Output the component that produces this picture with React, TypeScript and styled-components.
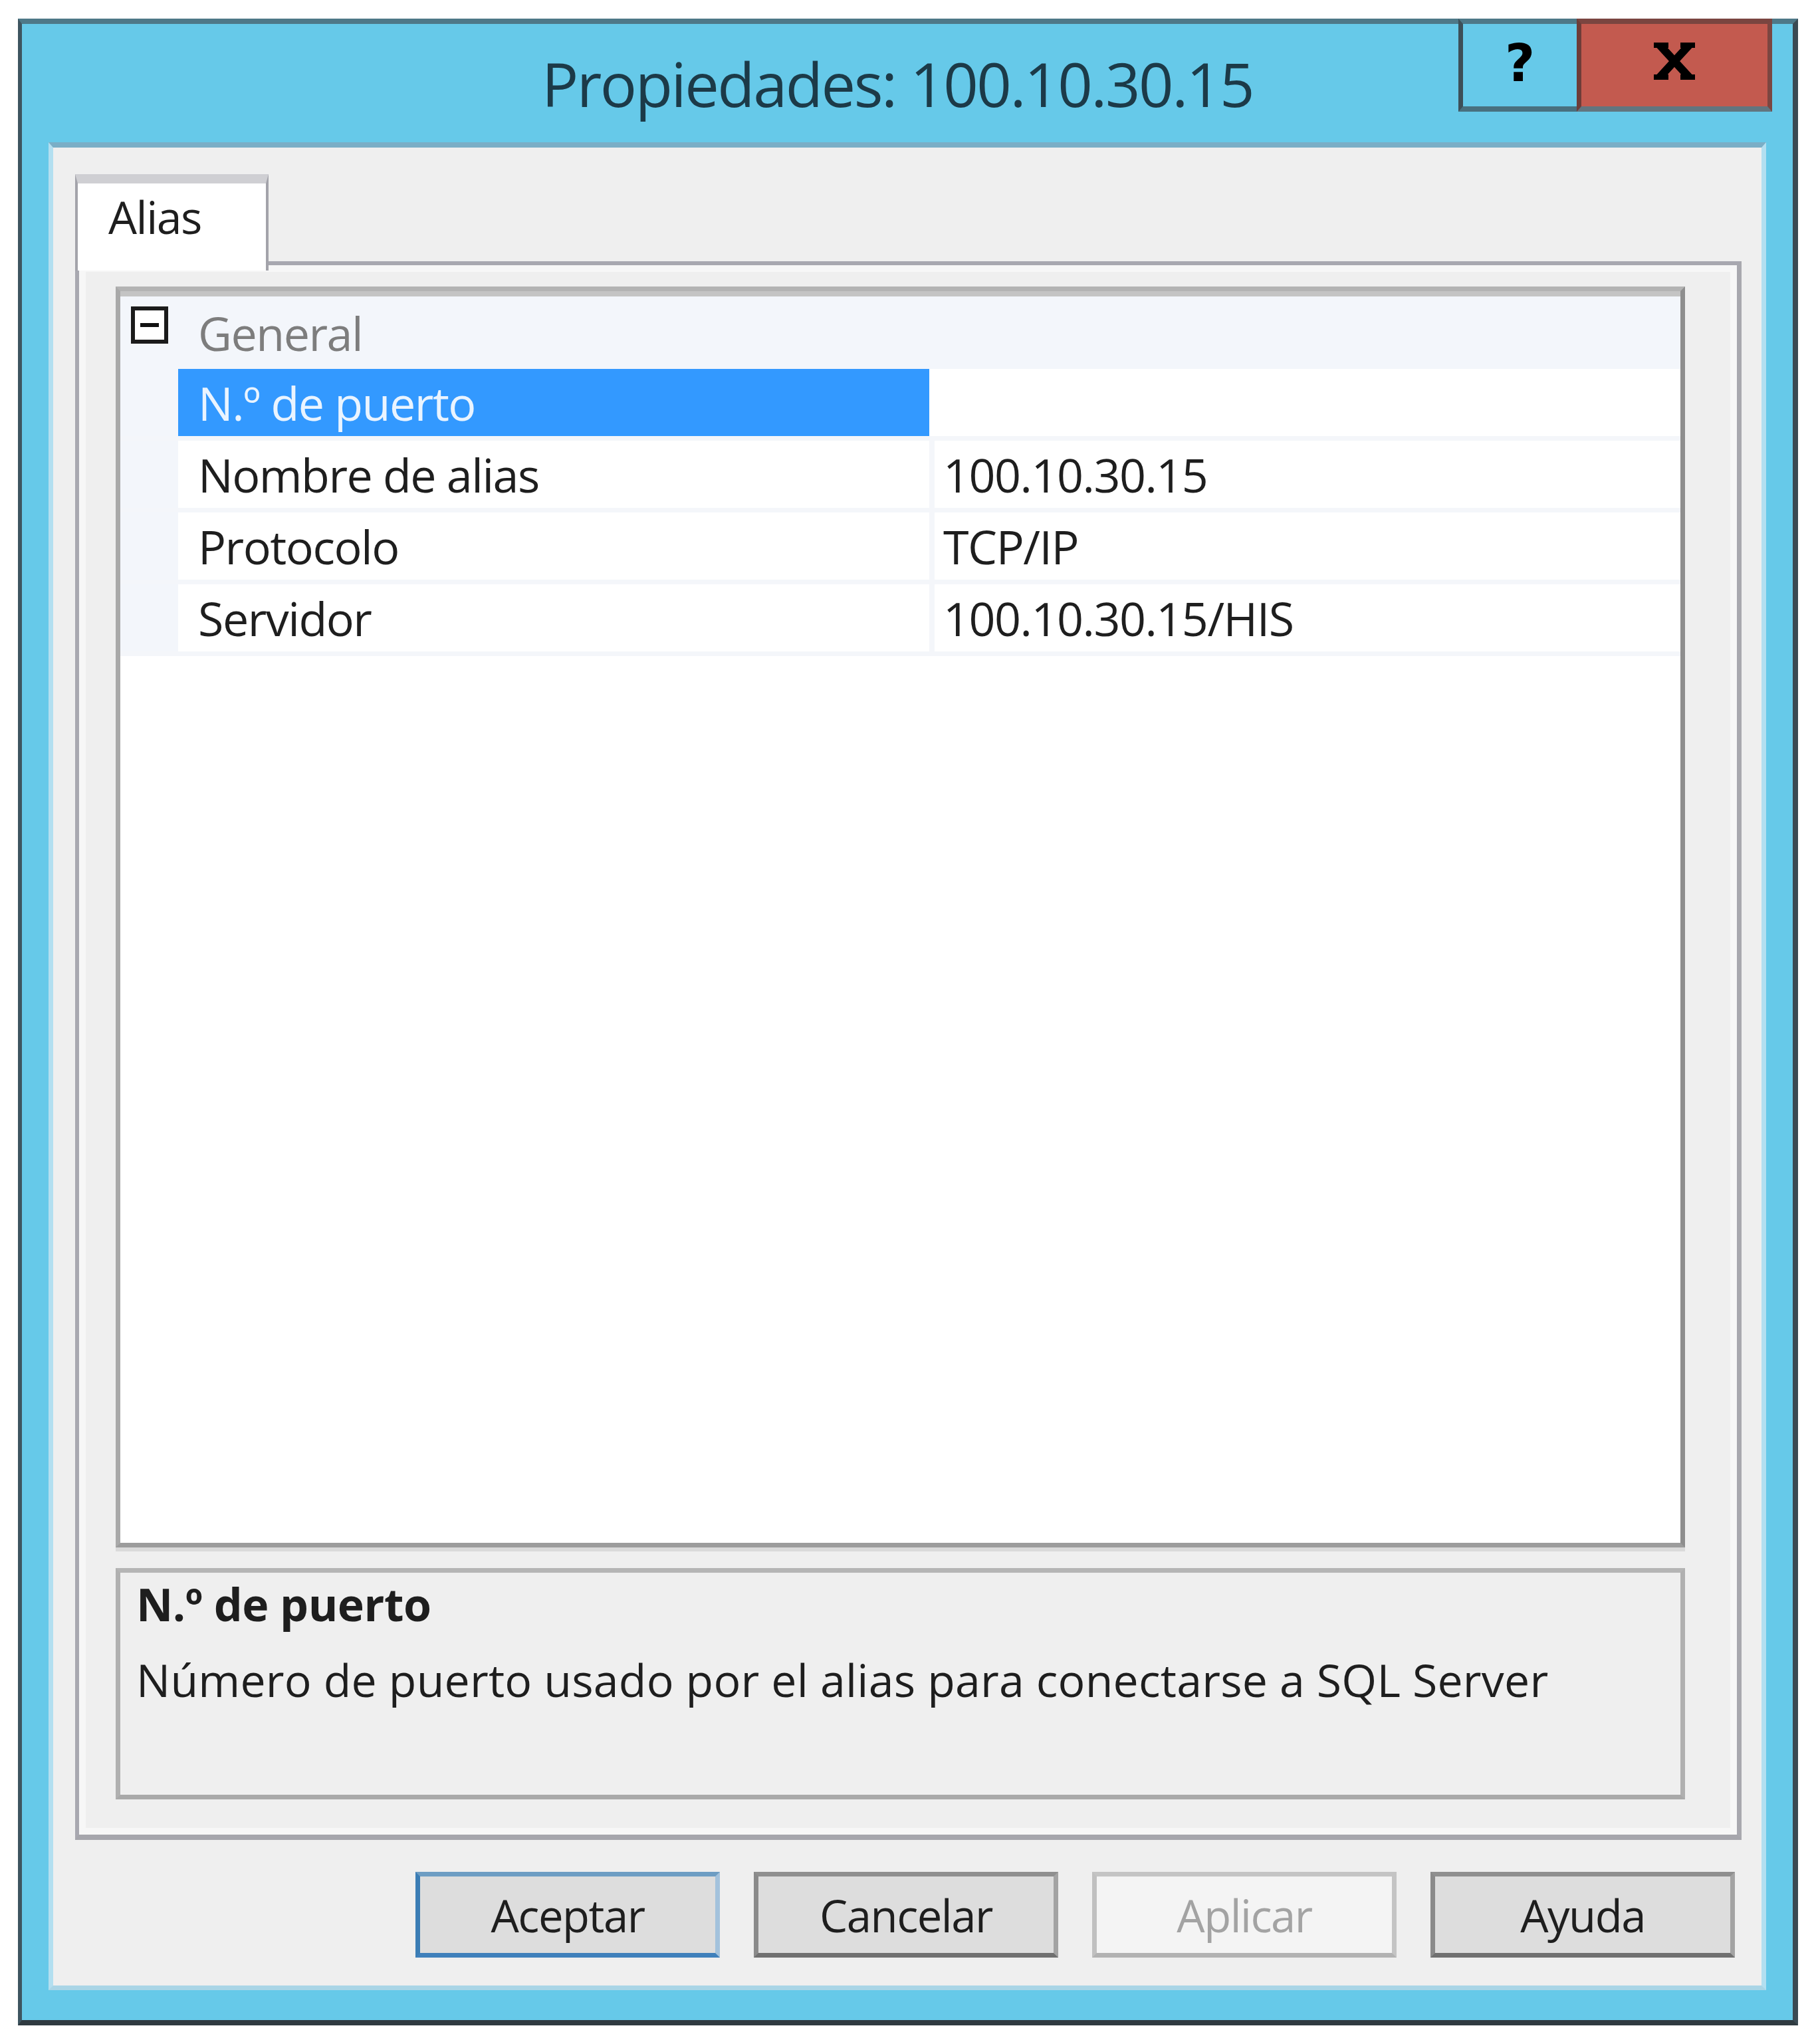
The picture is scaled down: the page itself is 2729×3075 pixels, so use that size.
import React from 'react';
import styled, { createGlobalStyle } from 'styled-components';

const GlobalStyle = createGlobalStyle`
  body {
    margin: 0;
    background: #ffffff;
    font-family: "Open Sans", "Noto Sans", sans-serif;
  }
`;

const Page = styled.div`
  width: 2729px;
  height: 3075px;
  box-sizing: border-box;
  padding: 28px 0 0 27px;
`;

const Window = styled.div`
  width: 2678px;
  height: 3019px;
  box-sizing: border-box;
  background: #66c9e9;
  border-style: solid;
  border-width: 8px 8px 8px 6px;
  border-color: #4e7888 #3b4a53 #2f3a40 #3e5560;
  display: flex;
  flex-direction: column;
`;

const TitleBar = styled.div`
  height: 178px;
  flex: none;
  display: grid;
  grid-template-columns: 1fr auto 1fr;
  align-items: center;
`;

const Title = styled.div`
  grid-column: 2;
  margin-right: 30px;
  font-size: 92px;
  letter-spacing: -2.5px;
  color: #1c3a48;
  white-space: nowrap;
`;

const CaptionButtons = styled.div`
  grid-column: 3;
  justify-self: end;
  align-self: start;
  margin-top: -8px;
  margin-right: 31px;
  height: 140px;
  display: flex;
`;

const CaptionButton = styled.div<{ $close?: boolean }>`
  box-sizing: border-box;
  height: 140px;
  width: ${(p) => (p.$close ? '294px' : '178px')};
  display: flex;
  align-items: center;
  justify-content: center;
  padding-bottom: 6px;
  background: ${(p) => (p.$close ? '#c35a4f' : '#66c9e9')};
  border-style: solid;
  border-width: ${(p) => (p.$close ? '8px 7px 8px 7px' : '8px 0 8px 7px')};
  border-color: ${(p) =>
    p.$close
      ? '#7a4540 #7b4641 #62757f #6e3c38'
      : '#4e7888 transparent #48707f #3d4f58'};
  color: #000;
  font-family: "DejaVu Sans", sans-serif;
  font-weight: bold;
  font-size: 78px;
  line-height: 1;
`;

const Client = styled.div`
  flex: 1;
  margin: 0 40px 45px 40px;
  box-sizing: border-box;
  background: #efefef;
  border-style: solid;
  border-width: 8px 7px 7px 7px;
  border-color: #7aaec6 #b3dff0 #a9d5e6 #b3dff0;
  padding: 40px 30px 42px 33px;
  display: flex;
  flex-direction: column;
`;

const Tab = styled.div`
  position: relative;
  z-index: 1;
  width: 291px;
  height: 145px;
  box-sizing: border-box;
  margin-bottom: -14px;
  background: #ffffff;
  border-style: solid;
  border-width: 14px 4px 0 4px;
  border-color: #cfcfd3 #a3a3aa #ffffff #a3a3aa;
  padding: 15px 0 0 46px;
  font-size: 68px;
  letter-spacing: -1.5px;
  line-height: 70px;
  color: #1e1e1e;
`;

const Panel = styled.div`
  height: 2375px;
  box-sizing: border-box;
  background: #efefef;
  border-style: solid;
  border-width: 6px 7px 8px 6px;
  border-color: #a8a8b0 #a8a8ae #a6a6ac #a8a8b0;
  box-shadow: inset 0 0 0 10px #f7f7f7;
  padding: 32px 78px 53px 55px;
  display: flex;
  flex-direction: column;
`;

const Grid = styled.div`
  flex: 1;
  background: #ffffff;
  border-style: solid;
  border-width: 7px;
  border-color: #b3b3b3 #8e8e8e #9c9c9c #a9a9a9;
  box-shadow: 0 6px 0 #dadada;
`;

const GridBody = styled.div`
  border-top: 8px solid #c4c4c4;
`;

const CategoryRow = styled.div`
  height: 109px;
  background: #f3f6fb;
  display: flex;
  align-items: center;
  font-size: 70px;
  letter-spacing: -1.5px;
  color: #7d7d7d;
`;

const Toggle = styled.svg`
  align-self: flex-start;
  margin: 15px 45px 0 16px;
  flex: none;
`;

const PropRow = styled.div`
  height: 101px;
  display: grid;
  grid-template-columns: 87px 1130px 8px 1fr;
  border-bottom: 7px solid #f4f6fa;
  font-size: 70px;
  letter-spacing: -1.5px;
  color: #1e1e1e;
`;

const Gutter = styled.div`
  background: #f3f6fb;
`;

const NameCell = styled.div<{ $selected?: boolean }>`
  display: flex;
  align-items: center;
  padding-left: 30px;
  white-space: nowrap;
  background: ${(p) => (p.$selected ? '#3399ff' : '#ffffff')};
  color: ${(p) => (p.$selected ? '#eaf4ff' : '#1e1e1e')};
`;

const Divider = styled.div<{ $selected?: boolean }>`
  background: ${(p) => (p.$selected ? '#ffffff' : '#f4f6fa')};
`;

const ValueCell = styled.div`
  display: flex;
  align-items: center;
  padding-left: 13px;
  white-space: nowrap;
`;

const Description = styled.div`
  margin-top: 31px;
  height: 348px;
  flex: none;
  box-sizing: border-box;
  background: #efefef;
  border-style: solid;
  border-width: 7px;
  border-color: #b5b5b5 #b0b0b0 #a9a9a9 #b0b0b0;
  padding: 2px 24px;
  color: #1e1e1e;
`;

const DescTitle = styled.div`
  font-weight: bold;
  font-size: 68px;
  letter-spacing: -0.5px;
  line-height: 90px;
`;

const DescText = styled.div`
  margin-top: 24px;
  font-size: 68px;
  letter-spacing: 0.2px;
  line-height: 90px;
  white-space: nowrap;
`;

const ButtonRow = styled.div`
  margin-top: 48px;
  display: flex;
  justify-content: flex-end;
  gap: 51px;
  padding-right: 10px;
`;

const variants = {
  default: {
    bg: '#dddddd',
    border: '#6d9dc3 #a3c2dc #3f80bb #3b7db5',
    color: '#1e1e1e',
  },
  normal: {
    bg: '#dddddd',
    border: '#8f8f8f #a3a3a3 #707070 #8a8a8a',
    color: '#1e1e1e',
  },
  disabled: {
    bg: '#f4f4f4',
    border: '#c4c4c4 #c4c4c4 #b2b2b2 #c0c0c0',
    color: '#a3a3a3',
  },
};

type Variant = keyof typeof variants;

const Button = styled.div<{ $variant: Variant }>`
  width: 458px;
  height: 129px;
  box-sizing: border-box;
  display: flex;
  align-items: center;
  justify-content: center;
  background: ${(p) => variants[p.$variant].bg};
  border: 7px solid;
  border-color: ${(p) => variants[p.$variant].border};
  color: ${(p) => variants[p.$variant].color};
  font-size: 67px;
  letter-spacing: -1.5px;
`;

function CloseGlyph() {
  return (
    <svg width="64" height="56" viewBox="0 0 64 56" style={{ marginTop: -6 }}>
      <rect x="1" y="0" width="22" height="8" fill="#000" />
      <rect x="41" y="0" width="22" height="8" fill="#000" />
      <rect x="1" y="48" width="22" height="8" fill="#000" />
      <rect x="41" y="48" width="22" height="8" fill="#000" />
      <path d="M10 4 L54 52 M54 4 L10 52" stroke="#000" strokeWidth="12" />
    </svg>
  );
}

const rows = [
  { name: 'N.º de puerto', value: '', selected: true },
  { name: 'Nombre de alias', value: '100.10.30.15' },
  { name: 'Protocolo', value: 'TCP/IP' },
  { name: 'Servidor', value: '100.10.30.15/HIS' },
];

export default function App() {
  return (
    <Page>
      <GlobalStyle />
      <Window>
        <TitleBar>
          <Title>Propiedades: 100.10.30.15</Title>
          <CaptionButtons>
            <CaptionButton>?</CaptionButton>
            <CaptionButton $close>
              <CloseGlyph />
            </CaptionButton>
          </CaptionButtons>
        </TitleBar>
        <Client>
          <Tab>Alias</Tab>
          <Panel>
            <Grid>
              <GridBody>
                <CategoryRow>
                  <Toggle width="56" height="56" viewBox="0 0 56 56">
                    <rect x="3" y="3" width="50" height="50" fill="#fff" stroke="#1b1b1b" strokeWidth="6" />
                    <rect x="14" y="25" width="28" height="6" fill="#111" />
                  </Toggle>
                  General
                </CategoryRow>
                {rows.map((r) => (
                  <PropRow key={r.name}>
                    <Gutter />
                    <NameCell $selected={r.selected}>{r.name}</NameCell>
                    <Divider $selected={r.selected} />
                    <ValueCell>{r.value}</ValueCell>
                  </PropRow>
                ))}
              </GridBody>
            </Grid>
            <Description>
              <DescTitle>N.º de puerto</DescTitle>
              <DescText>Número de puerto usado por el alias para conectarse a SQL Server</DescText>
            </Description>
          </Panel>
          <ButtonRow>
            <Button $variant="default">Aceptar</Button>
            <Button $variant="normal">Cancelar</Button>
            <Button $variant="disabled">Aplicar</Button>
            <Button $variant="normal">Ayuda</Button>
          </ButtonRow>
        </Client>
      </Window>
    </Page>
  );
}
